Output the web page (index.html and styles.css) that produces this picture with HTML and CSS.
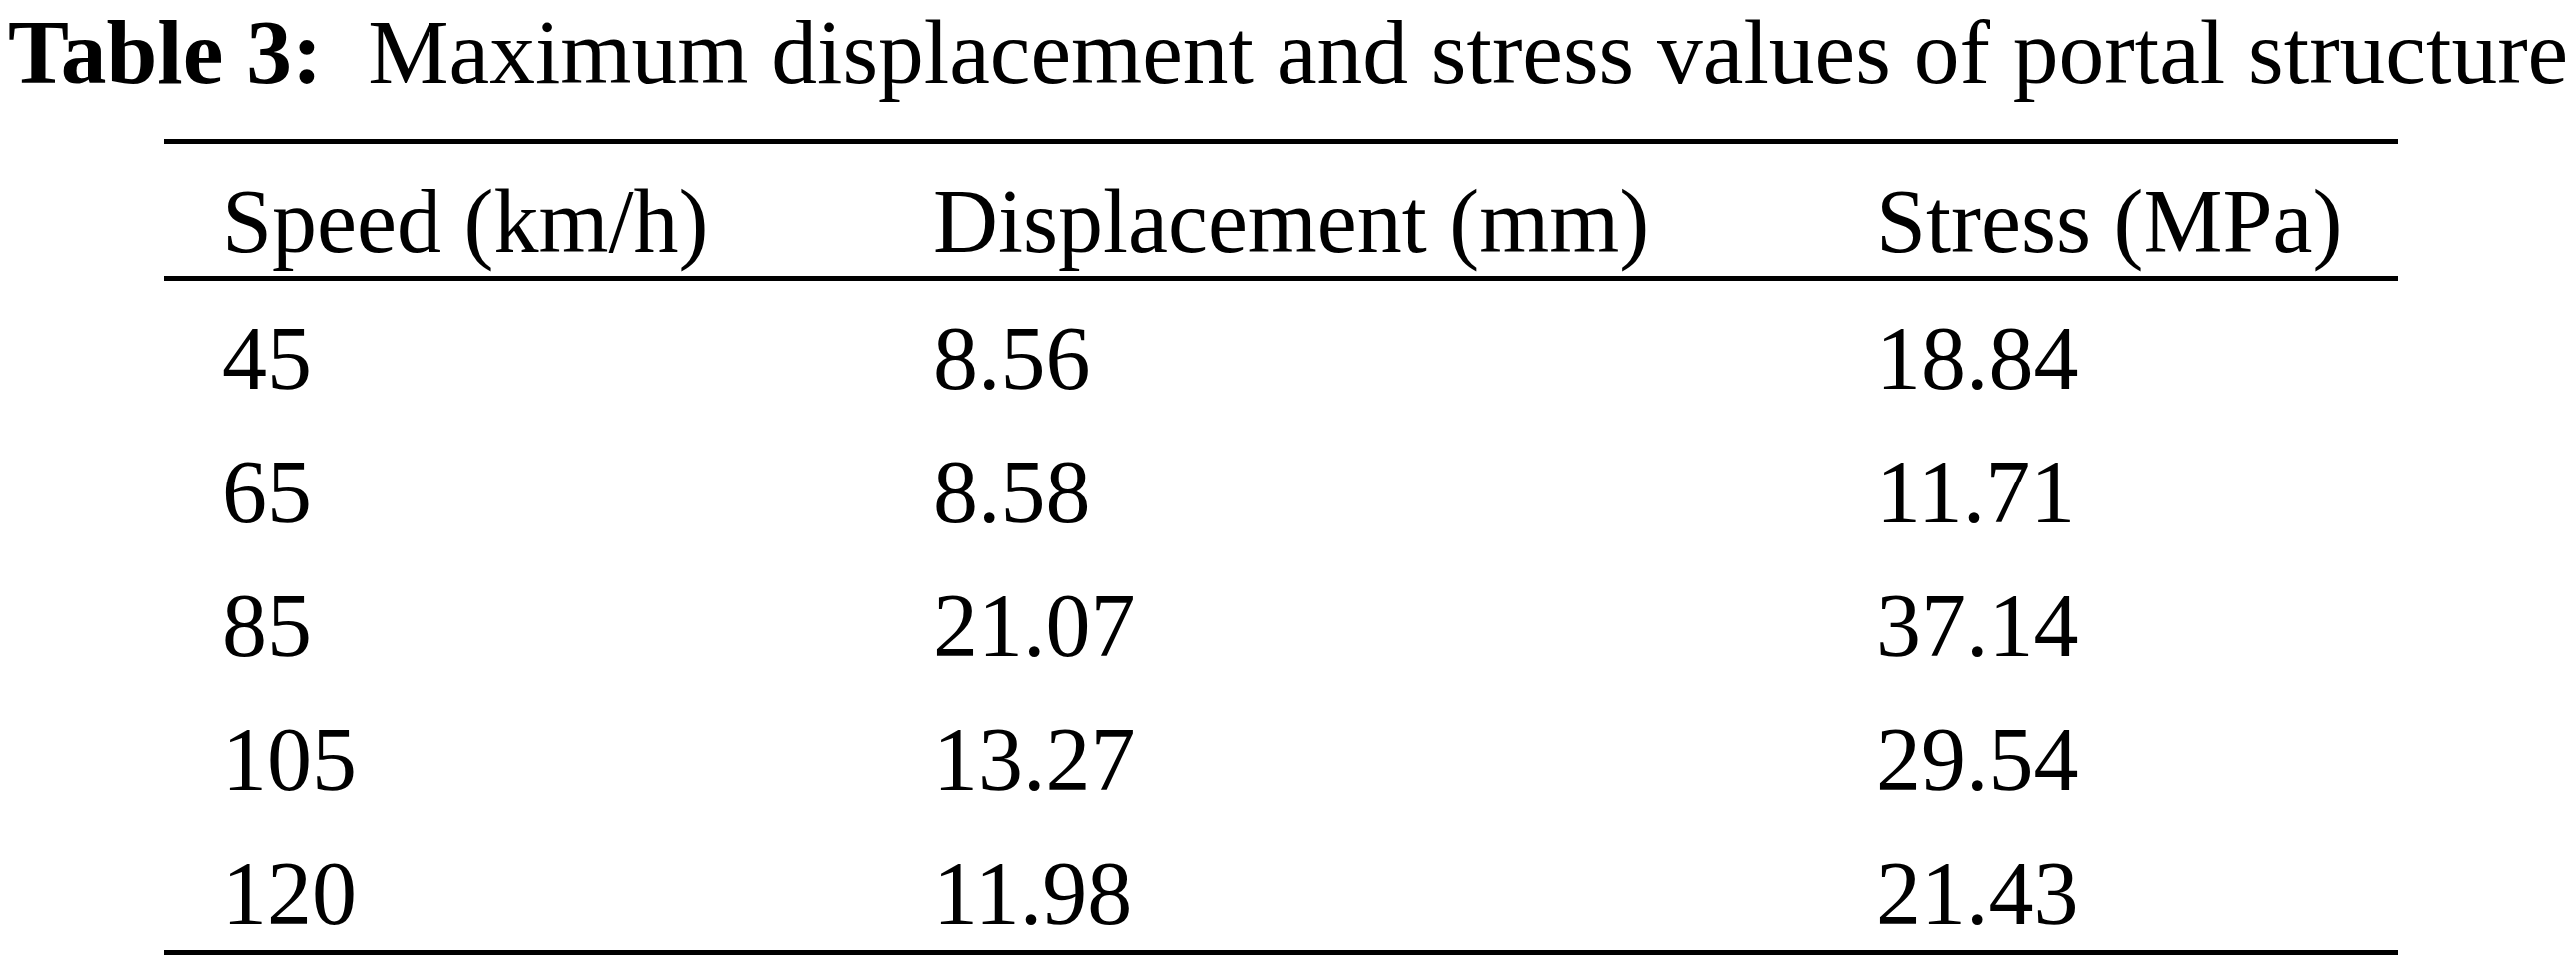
FILE: index.html
```html
<!DOCTYPE html>
<html lang="en">
<head>
    <meta charset="UTF-8">
    <meta name="viewport" content="width=device-width, initial-scale=1.0">
    <title>Table 3</title>
    <link rel="stylesheet" href="styles.css">
</head>
<body>

    <div class="table-title">
        <b>Table 3:</b>&nbsp; Maximum displacement and stress values of portal structure
    </div>

    <table class="data-table">
        <colgroup>
            <col class="col-speed">
            <col class="col-disp">
            <col class="col-stress">
        </colgroup>
        <thead>
            <tr>
                <th>Speed (km/h)</th>
                <th>Displacement (mm)</th>
                <th>Stress (MPa)</th>
            </tr>
        </thead>
        <tbody>
            <tr>
                <td>45</td>
                <td>8.56</td>
                <td>18.84</td>
            </tr>
            <tr>
                <td>65</td>
                <td>8.58</td>
                <td>11.71</td>
            </tr>
            <tr>
                <td>85</td>
                <td>21.07</td>
                <td>37.14</td>
            </tr>
            <tr>
                <td>105</td>
                <td>13.27</td>
                <td>29.54</td>
            </tr>
            <tr>
                <td>120</td>
                <td>11.98</td>
                <td>21.43</td>
            </tr>
        </tbody>
    </table>

</body>
</html>
```

FILE: styles.css
```css
body {
    font-family: "Liberation Serif", "Times New Roman", serif;
    margin: 0;
    padding: 0;
    background-color: #fff;
    color: #000;
}

* {
    box-sizing: border-box;
}

.table-title {
    font-size: 91.5px;
    line-height: 90px;
    padding-top: 7px;
    padding-left: 8px;
    white-space: nowrap;
}

.table-title b {
    font-weight: bold;
}

.data-table {
    margin-top: 42px;
    margin-left: 164px;
    width: 2237px;
    border-collapse: separate;
    border-spacing: 0;
    table-layout: fixed;
    font-size: 90px;
    line-height: 90px;
}

.col-speed {
    width: 712px;
}

.col-disp {
    width: 944px;
}

.col-stress {
    width: 581px;
}

th, td {
    text-align: left;
    font-weight: normal;
    padding: 33px 0 11px 58px;
    white-space: nowrap;
}

th {
    padding-bottom: 9px;
    border-top: 5px solid #000;
    border-bottom: 5px solid #000;
}

tbody tr:last-child td {
    border-bottom: 5px solid #000;
}
```
